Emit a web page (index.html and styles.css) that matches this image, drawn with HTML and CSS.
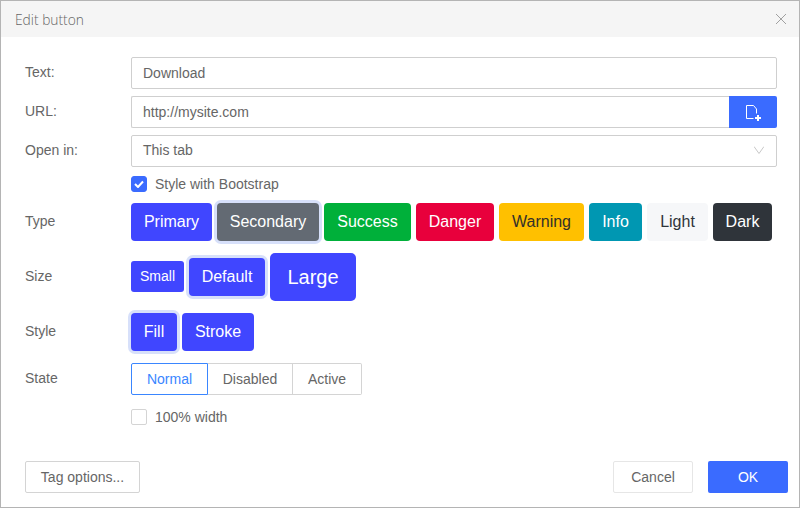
FILE: index.html
```html
<!DOCTYPE html>
<html lang="en">
<head>
<meta charset="utf-8">
<title>Edit button</title>
<link rel="stylesheet" href="styles.css">
</head>
<body>
<div class="dialog">
  <header class="titlebar">
    <span class="title">Edit button</span>
    <svg class="close" width="10" height="10" viewBox="0 0 10 10"><path d="M0 0l10 10M10 0L0 10" fill="none" stroke="#a0a0a0" stroke-width="1"/></svg>
  </header>
  <main class="body">
    <div class="row field">
      <label class="label">Text:</label>
      <div class="control"><input class="input" type="text" value="Download"></div>
    </div>
    <div class="row field">
      <label class="label">URL:</label>
      <div class="control group">
        <input class="input input-joined" type="text" value="http://mysite.com">
        <button class="file-btn" type="button" aria-label="Browse">
          <svg width="16" height="18" viewBox="0 0 16 18"><path d="M8.5 15.5h-7v-13h7l3 3.5v4.5" fill="none" stroke="#fff" stroke-width="1"/><path d="M12 12h2v2h2v2h-2v2h-2v-2h-2v-2h2z" fill="#fff"/></svg>
        </button>
      </div>
    </div>
    <div class="row field">
      <label class="label">Open in:</label>
      <div class="control select">
        <span>This tab</span>
        <svg width="10" height="8" viewBox="0 0 10 8"><path d="M0 .5l5 7 5-7" fill="none" stroke="#c8c8c8" stroke-width="1"/></svg>
      </div>
    </div>
    <div class="row check-row check-first">
      <span class="label"></span>
      <label class="check">
        <span class="box box-on"><svg width="10" height="8" viewBox="0 0 10 8"><path d="M1 4l3 3 5-5.5" fill="none" stroke="#fff" stroke-width="2"/></svg></span>
        <span>Style with Bootstrap</span>
      </label>
    </div>
    <div class="row type-row">
      <span class="label">Type</span>
      <div class="btns">
        <button class="btn primary" type="button">Primary</button>
        <button class="btn secondary ring" type="button">Secondary</button>
        <button class="btn success" type="button">Success</button>
        <button class="btn danger" type="button">Danger</button>
        <button class="btn warning" type="button">Warning</button>
        <button class="btn info" type="button">Info</button>
        <button class="btn light" type="button">Light</button>
        <button class="btn dark" type="button">Dark</button>
      </div>
    </div>
    <div class="row opt-row">
      <span class="label">Size</span>
      <div class="btns">
        <button class="btn primary sm" type="button">Small</button>
        <button class="btn primary md ring" type="button">Default</button>
        <button class="btn primary lg" type="button">Large</button>
      </div>
    </div>
    <div class="row opt-row">
      <span class="label">Style</span>
      <div class="btns">
        <button class="btn primary fill ring" type="button">Fill</button>
        <button class="btn primary stroke" type="button">Stroke</button>
      </div>
    </div>
    <div class="row opt-row">
      <span class="label">State</span>
      <div class="seg">
        <button class="seg-item seg-on" type="button">Normal</button>
        <button class="seg-item seg-disabled" type="button">Disabled</button>
        <button class="seg-item seg-active" type="button">Active</button>
      </div>
    </div>
    <div class="row check-row check-last">
      <span class="label"></span>
      <label class="check">
        <span class="box"></span>
        <span>100% width</span>
      </label>
    </div>
  </main>
  <footer class="footer">
    <button class="plain tag" type="button">Tag options...</button>
    <div class="actions">
      <button class="plain cancel" type="button">Cancel</button>
      <button class="ok" type="button">OK</button>
    </div>
  </footer>
</div>
</body>
</html>
```
FILE: styles.css
```css
* { box-sizing: border-box; }
html, body { margin: 0; height: 100%; }
body { font-family: "Liberation Sans", Arial, sans-serif; font-size: 14px; color: #666; background: #fff; }
button { font-family: inherit; cursor: pointer; }

.dialog { width: 800px; height: 508px; border: 1px solid #b4b4b4; display: flex; flex-direction: column; background: #fff; }

.titlebar { height: 36px; flex: none; background: #f5f5f5; display: flex; align-items: center; justify-content: space-between; padding: 0 13px 0 14px; }
.title { font-family: "Open Sans", sans-serif; font-size: 13.8px; font-weight: 300; color: #666; }
.close { display: block; }

.body { flex: 1; padding: 20px 22px 0 24px; display: flex; flex-direction: column; }
.row { display: flex; align-items: center; }
.label { width: 106px; flex: none; padding-bottom: 2px; line-height: 16px; }
.field + .field { margin-top: 7px; }
.control { flex: 1; height: 32px; }
.input { display: block; width: 100%; height: 32px; border: 1px solid #cfcfcf; border-radius: 2px; padding: 0 11px; font: 14px "Liberation Sans", Arial, sans-serif; color: #666; background: #fff; outline: none; }
.group { display: flex; }
.input-joined { flex: 1; border-radius: 2px 0 0 2px; border-right: 0; }
.file-btn { width: 48px; height: 32px; flex: none; padding: 0; border: 0; border-radius: 0 2px 2px 0; background: #3a6bff; display: flex; align-items: center; justify-content: center; }
.file-btn svg { display: block; }
.select { border: 1px solid #cfcfcf; border-radius: 2px; padding: 0 12px 2px 11px; display: flex; align-items: center; justify-content: space-between; }

.check-row .label { padding: 0; }
.check { display: flex; align-items: center; gap: 8px; line-height: 16px; }
.box { width: 16px; height: 16px; border: 1px solid #d4d4d4; border-radius: 2px; background: #fff; display: flex; align-items: center; justify-content: center; }
.box-on { border-color: #3a6bff; background: #3a6bff; border-radius: 3px; }
.box svg { display: block; }
.check-first { margin-top: 9px; }
.check-last { margin-top: 14px; }

.type-row { margin-top: 11px; }
.opt-row { margin-top: 12px; }
.btns { display: flex; align-items: center; gap: 5px; }
.btn { height: 38px; padding: 0; border: 1px solid transparent; border-radius: 4px; font-size: 16px; line-height: 24px; color: #fff; white-space: nowrap; }
.primary { background: #4046ff; width: 81px; }
.secondary { background: #636a73; width: 102px; }
.success { background: #00b03a; width: 87px; }
.danger { background: #e8003c; width: 78px; }
.warning { background: #ffc000; color: #33302a; width: 85px; }
.info { background: #0097b2; width: 53px; }
.light { background: #f6f7f9; color: #2f343a; width: 61px; }
.dark { background: #2f343a; width: 59px; }
.sm { width: 53px; height: 31px; margin-bottom: 1px; font-size: 14px; line-height: 21px; border-radius: 3px; }
.md { width: 76px; }
.lg { width: 86px; height: 48px; font-size: 20px; line-height: 30px; border-radius: 5px; }
.fill { width: 46px; }
.stroke { width: 72px; }
.ring { box-shadow: 0 0 0 3px #d7e0fa; }

.seg { display: flex; height: 32px; }
.seg-item { height: 32px; padding: 0; border: 1px solid #d4d4d4; border-left-width: 0; background: #fff; font-size: 14px; color: #666; }
.seg-on { width: 77px; border: 1px solid #3a86ff; border-radius: 2px 0 0 2px; color: #3a86ff; }
.seg-disabled { width: 85px; }
.seg-active { width: 69px; border-radius: 0 2px 2px 0; }

.footer { flex: none; display: flex; justify-content: space-between; padding: 0 11px 14px 24px; }
.actions { display: flex; gap: 15px; }
.plain { height: 32px; border: 1px solid #d4d4d4; border-radius: 2px; background: #fff; font-size: 14px; color: #666; }
.tag { width: 115px; padding: 0; }
.cancel { width: 80px; padding: 0; border-color: #e6e6e6; }
.ok { width: 80px; height: 32px; border: 0; border-radius: 2px; background: #3a6bff; color: #fff; font-size: 14px; }
```
